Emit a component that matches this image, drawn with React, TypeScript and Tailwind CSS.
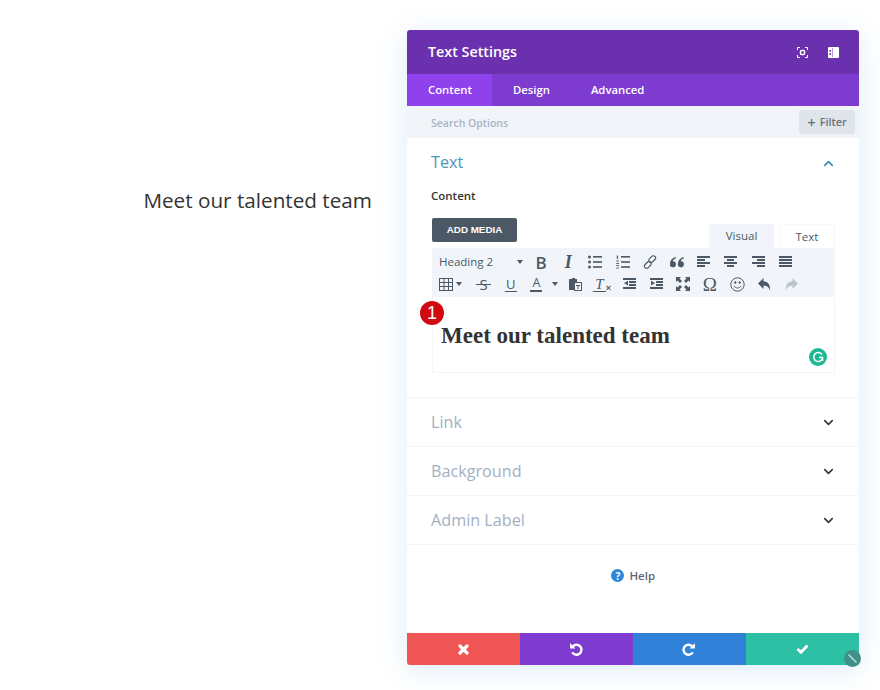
import React from 'react';
import { ChevronDown, ChevronUp } from 'lucide-react';

const font = "font-['Open_Sans',sans-serif]";

const Bars: React.FC<{ rows: [number, number][] }> = ({ rows }) => (
  <svg width="14" height="14" viewBox="0 0 14 14" fill="#4c5866">
    {rows.map(([x, w], i) => (
      <rect key={i} x={x} y={1 + i * 3} width={w} height="2" />
    ))}
  </svg>
);

const Tool: React.FC<{ children: React.ReactNode; className?: string }> = ({ children, className = '' }) => (
  <div className={`relative w-[27.2px] h-[22px] flex items-center justify-center shrink-0 text-[#4c5866] ${className}`}>{children}</div>
);

const Caret = () => <div className="w-0 h-0 border-x-[3px] border-x-transparent border-t-[4px] border-t-[#4c5866]" />;

const Toolbar = () => (
  <div className="bg-[#f1f5f9] h-[49px] pl-[6px] pr-[6px] pt-[3px] flex flex-col">
    <div className="flex items-center h-[22px]">
      <div className={`w-[89.500px] pl-[1px] flex items-center text-[11.500px] text-[#4c5866] ${font}`}>
        Heading 2
        <div className="ml-[24px]"><Caret /></div>
      </div>
      <Tool><span className="font-['Open_Sans',sans-serif] font-semibold text-[17px] leading-none">B</span></Tool>
      <Tool><span className="font-['Liberation_Serif',serif] font-bold italic text-[18px] leading-none">I</span></Tool>
      <Tool>
        <svg width="14" height="14" viewBox="0 0 14 14" fill="#4c5866">
          <circle cx="1.500" cy="2" r="1.500" /><circle cx="1.500" cy="7" r="1.500" /><circle cx="1.500" cy="12" r="1.500" />
          <rect x="5" y="1" width="9" height="1.600" /><rect x="5" y="6.200" width="9" height="1.600" /><rect x="5" y="11.200" width="9" height="1.600" />
        </svg>
      </Tool>
      <Tool>
        <svg width="14" height="14" viewBox="0 0 14 14" fill="#4c5866">
          <rect x="0.800" y="0.500" width="1.200" height="3.400" /><rect x="0.300" y="5.500" width="2.600" height="1" /><rect x="0.300" y="8" width="2.600" height="1" /><rect x="0.300" y="10" width="2.600" height="1" /><rect x="0.300" y="12.500" width="2.600" height="1" />
          <rect x="5" y="1" width="9" height="1.600" /><rect x="5" y="6.200" width="9" height="1.600" /><rect x="5" y="11.200" width="9" height="1.600" />
        </svg>
      </Tool>
      <Tool>
        <svg width="14" height="14" viewBox="0 0 14 14" fill="none" stroke="#4c5866" strokeWidth="1.200">
          <rect x="7" y="0.300" width="4.400" height="7.600" rx="2.200" transform="rotate(45 9.200 4.100)" />
          <rect x="2.600" y="6.100" width="4.400" height="7.600" rx="2.200" transform="rotate(45 4.800 9.900)" />
        </svg>
      </Tool>
      <Tool>
        <svg width="14" height="12" viewBox="0 0 14 12" fill="#4c5866">
          <path d="M6 2.200C3.600 3 2.800 4.400 2.800 5.200A3 3 0 1 1 0 7.400C0 4.400 2.200 2 5.600 1zM14 2.200c-2.400.8-3.200 2.200-3.200 3a3 3 0 1 1-2.800 2.200C8 4.400 10.200 2 13.600 1z" />
        </svg>
      </Tool>
      <Tool><Bars rows={[[0, 13], [0, 8], [0, 13], [0, 8]]} /></Tool>
      <Tool><Bars rows={[[0, 13], [3, 7], [0, 13], [3, 7]]} /></Tool>
      <Tool><Bars rows={[[0, 13], [5, 8], [0, 13], [5, 8]]} /></Tool>
      <Tool><Bars rows={[[0, 13], [0, 13], [0, 13], [0, 13]]} /></Tool>
    </div>
    <div className="flex items-center h-[22px]">
      <div className="w-[32px] pl-[1px] flex items-center gap-[2px] shrink-0">
        <svg width="15" height="13" viewBox="0 0 15 13" fill="none" stroke="#4c5866" strokeWidth="1">
          <rect x="0.500" y="0.500" width="13" height="12" />
          <path d="M0.500 4.500h13M0.500 8.500h13M5 .5v12M9.500 .5v12" />
        </svg>
        <Caret />
      </div>
      <Tool>
        <span className={`${font} text-[15px] leading-none`}>S</span>
        <div className="absolute left-[6px] right-[6px] top-[11px] h-[1px] bg-[#4c5866]" />
      </Tool>
      <Tool><span className={`${font} text-[13px] leading-[14px] border-b-[1.500px] border-[#4c5866] px-[1px]`}>U</span></Tool>
      <div className="w-[24px] flex items-center justify-center shrink-0 text-[#4c5866]">
        <span className={`${font} text-[12.500px] leading-[14px] border-b-[2px] border-[#4c5866] px-[2px]`}>A</span>
      </div>
      <div className="w-[14px] flex justify-center shrink-0"><Caret /></div>
      <Tool className="ml-[-1px]">
        <svg width="14" height="14" viewBox="0 0 14 14" fill="#4c5866">
          <path d="M1 2h3V1h3v1h2v3H6v8H1z" />
          <rect x="6.500" y="5.500" width="7" height="8" fill="#f1f5f9" stroke="#4c5866" />
          <rect x="8" y="8" width="4" height="1" /><rect x="9.500" y="8" width="1" height="4" />
        </svg>
      </Tool>
      <Tool>
        <span className="font-['Liberation_Serif',serif] italic text-[15px] leading-[14px] border-b-[1.500px] border-[#4c5866] px-[2px]">
          T
        </span>
        <span className="text-[9px] leading-none mt-[8px] font-['Liberation_Sans',sans-serif] font-bold">×</span>
      </Tool>
      <Tool className="pl-[1px]">
        <svg width="14" height="14" viewBox="0 0 14 14" fill="#4c5866">
          <rect x="0" y="1" width="13" height="2" /><rect x="6" y="4" width="7" height="2" /><rect x="6" y="7" width="7" height="2" /><rect x="0" y="10" width="13" height="2" />
          <path d="M5 3.800v4.600L1 6.100z" />
        </svg>
      </Tool>
      <Tool className="pl-[1px]">
        <svg width="14" height="14" viewBox="0 0 14 14" fill="#4c5866">
          <rect x="0" y="1" width="13" height="2" /><rect x="6" y="4" width="7" height="2" /><rect x="6" y="7" width="7" height="2" /><rect x="0" y="10" width="13" height="2" />
          <path d="M1 3.800v4.600L5 6.100z" />
        </svg>
      </Tool>
      <Tool className="ml-[-1px]">
        <svg width="14" height="14" viewBox="0 0 14 14" fill="#4c5866">
          <path d="M0 0h5L3.500 1.500 6 4 4 6 1.500 3.500 0 5zM14 0v5l-1.500-1.500L10 6 8 4l2.500-2.500L9 0zM0 14V9l1.500 1.500L4 8l2 2-2.500 2.500L5 14zM14 14H9l1.500-1.500L8 10l2-2 2.500 2.500L14 9z" />
        </svg>
      </Tool>
      <Tool><span className="font-['Liberation_Serif',serif] text-[19px] leading-none">Ω</span></Tool>
      <Tool>
        <svg width="15" height="15" viewBox="0 0 15 15" fill="none" stroke="#4c5866" strokeWidth="1">
          <circle cx="7.500" cy="7.500" r="6.700" />
          <path d="M4 9c1 2.600 6 2.600 7 0" />
          <circle cx="5.300" cy="5.500" r=".8" fill="#4c5866" /><circle cx="9.700" cy="5.500" r=".8" fill="#4c5866" />
        </svg>
      </Tool>
      <Tool>
        <svg width="13" height="13" viewBox="0 0 13 13" fill="#4c5866">
          <path d="M5.500 0v3.200C9.500 3.500 12.500 6 12 12.500 10.800 9 9 7.800 5.500 7.500V11L0 5.500z" />
        </svg>
      </Tool>
      <Tool>
        <svg width="13" height="13" viewBox="0 0 13 13" fill="#bcc4ce">
          <path d="M7.500 0v3.200C3.500 3.500.5 6 1 12.500 2.200 9 4 7.800 7.500 7.500V11L13 5.500z" />
        </svg>
      </Tool>
    </div>
  </div>
);

const Collapsed: React.FC<{ title: string }> = ({ title }) => (
  <div className={`h-[49px] border-b border-[#f3f5f8] pl-[24px] pr-[23px] flex items-center justify-between ${font}`}>
    <span className="text-[16.200px] text-[#a3b0c2]">{title}</span>
    <ChevronDown size={15} strokeWidth={2.600} className="text-[#32373c]" />
  </div>
);

export default function App() {
  return (
    <div className={`w-[880px] h-[690px] bg-white flex overflow-hidden ${font}`}>
      <div className="w-[407px] pr-[35px] pt-[185px] text-right shrink-0">
        <span className="text-[20.700px] leading-[30px] text-[#333]">Meet our talented team</span>
      </div>

      <div className="relative w-[451.500px] h-[635px] mt-[30px] rounded-[3px] bg-white flex flex-col shadow-[0_5px_30px_rgba(43,135,218,0.16)]">
        <div className="h-[44px] bg-[#6a30ae] rounded-t-[3px] flex items-center justify-between pl-[21px] pr-[20px] shrink-0">
          <span className="text-[14.300px] font-semibold text-white">Text Settings</span>
          <div className="flex items-center gap-[20px]">
            <svg width="11" height="11" viewBox="0 0 11 11" fill="none" stroke="#fff" strokeWidth="1">
              <path d="M3 .5H.5V3M8 .5h2.500V3M3 10.500H.5V8M8 10.500h2.500V8" />
              <rect x="3.500" y="3.500" width="4" height="4" rx="1" strokeWidth="1.500" />
            </svg>
            <svg width="11" height="11" viewBox="0 0 11 11" fill="#fff">
              <path fillRule="evenodd" d="M1 0h9a1 1 0 0 1 1 1v9a1 1 0 0 1-1 1H1a1 1 0 0 1-1-1V1a1 1 0 0 1 1-1zm3.500 1H4v9h.5zM1.500 3H3v1.800H1.500zM1.500 6H3v1.800H1.500z" />
            </svg>
          </div>
        </div>

        <div className="h-[32px] pt-[1px] bg-[#7e3bd0] flex items-stretch text-[11.300px] font-semibold text-white shrink-0">
          <div className="w-[85px] mt-[-1px] bg-[#8f42ec] flex items-center pl-[21px] pt-[1px]">Content</div>
          <div className="flex items-center pl-[21px]">Design</div>
          <div className="flex items-center pl-[41px]">Advanced</div>
        </div>

        <div className="h-[32px] bg-[#f1f5f9] flex items-center justify-between pl-[24px] pr-[3.500px] shrink-0">
          <span className="text-[10.500px] font-semibold leading-[16px] pt-[1px] text-[#a9b4c2]">Search Options</span>
          <div className="w-[56px] h-[24px] bg-[#dfe5eb] rounded-[2px] flex items-center justify-center gap-[4px] text-[10.800px] font-semibold text-[#68727e]">
            <span className="text-[15px] leading-none">+</span>
            Filter
          </div>
        </div>

        <div className="h-[260px] border-b border-[#f3f5f8] pl-[24px] pr-[24px] pt-[12px] shrink-0">
          <div className="flex items-center justify-between h-[24px]">
            <span className="text-[16.200px] text-[#4b94b4]">Text</span>
            <ChevronUp size={15} strokeWidth={2.600} className="text-[#3a8aa8] mr-[-1px] mt-[2px]" />
          </div>
          <div className="mt-[14px] text-[11.500px] font-semibold leading-[16px] text-[#333]">Content</div>
          <div className="ml-[1px] mr-[-0.5px]">
            <div className="mt-[14px] flex items-end justify-between">
              <div className="w-[85px] h-[24px] mb-[6px] rounded-[2px] bg-[#4c5866] flex items-center justify-center font-['Liberation_Sans',sans-serif] text-[9.800px] font-bold text-white">
                ADD MEDIA
              </div>
              <div className="flex text-[11.500px] text-[#4c5866]">
                <div className="w-[65px] h-[24px] bg-[#f1f5f9] flex items-center justify-center">Visual</div>
                <div className="w-[56px] h-[24px] ml-[5px] border border-b-0 border-[#f5f7fa] flex items-center justify-center">Text</div>
              </div>
            </div>
            <Toolbar />
            <div className="h-[76px] border border-t-0 border-[#f3f5f8] pl-[8px] pt-[25px]">
              <span className="font-['Liberation_Serif',serif] font-bold text-[23px] leading-[28px] text-[#333]">Meet our talented team</span>
            </div>
          </div>
        </div>

        <Collapsed title="Link" />
        <Collapsed title="Background" />
        <Collapsed title="Admin Label" />

        <div className="flex-1 flex items-start justify-center pt-[22px] gap-[5px]">
          <div className="w-[13px] h-[13px] mt-[2px] ml-[1px] rounded-full bg-[#2b87da] flex items-center justify-center text-[10px] font-bold leading-none text-white">?</div>
          <span className="text-[11.500px] font-semibold leading-[17px] text-[#5f6873]">Help</span>
        </div>

        <div className="h-[32px] flex shrink-0 rounded-b-[3px] overflow-hidden">
          <div className="flex-1 bg-[#ef5555] flex items-center justify-center">
            <svg width="11" height="11" viewBox="0 0 11 11" stroke="#fff" strokeWidth="3.200" strokeLinecap="round"><path d="M2 2l7 7M9 2l-7 7" /></svg>
          </div>
          <div className="flex-1 bg-[#7e3bd0] flex items-center justify-center">
            <svg width="14" height="14" viewBox="0 0 13 13" fill="none" stroke="#fff" strokeWidth="2.200">
              <path d="M3.500 4.200A4.600 4.600 0 1 1 3 9.500" />
              <path d="M1 1v5h5z" fill="#fff" stroke="none" />
            </svg>
          </div>
          <div className="flex-1 bg-[#2f82d8] flex items-center justify-center">
            <svg width="14" height="14" viewBox="0 0 13 13" fill="none" stroke="#fff" strokeWidth="2.200">
              <path d="M9.500 4.200A4.600 4.600 0 1 0 10 9.500" />
              <path d="M12 1v5H7z" fill="#fff" stroke="none" />
            </svg>
          </div>
          <div className="flex-1 bg-[#2ec0a4] flex items-center justify-center">
            <svg width="13" height="10" viewBox="0 0 13 10" fill="none" stroke="#fff" strokeWidth="2.800"><path d="M1.500 5l3.500 3.300L11.500 1.500" /></svg>
          </div>
        </div>

        <div className="absolute left-[13px] top-[271px] w-[24px] h-[24px] rounded-full bg-[#d10a11] flex items-center justify-center font-['Liberation_Sans',sans-serif] text-[18px] text-white">1</div>
        <div className="absolute left-[402px] top-[318px] w-[18px] h-[18px] rounded-full bg-[#1fb894] flex items-center justify-center">
          <svg width="12" height="12" viewBox="0 0 12 12" fill="none" stroke="#fff" strokeWidth="1.500">
            <path d="M10 3.500A4.500 4.500 0 1 0 10.500 7.500M7 6.500h3.500V10" />
          </svg>
        </div>
        <div className="absolute left-[437px] top-[620px] w-[17px] h-[17px] rounded-full bg-[#3f9087] flex items-center justify-center">
          <svg width="11" height="11" viewBox="0 0 11 11" stroke="#cfe6e2" strokeWidth="1.200"><path d="M1.500 1.500l8 8" /></svg>
        </div>
      </div>
    </div>
  );
}
